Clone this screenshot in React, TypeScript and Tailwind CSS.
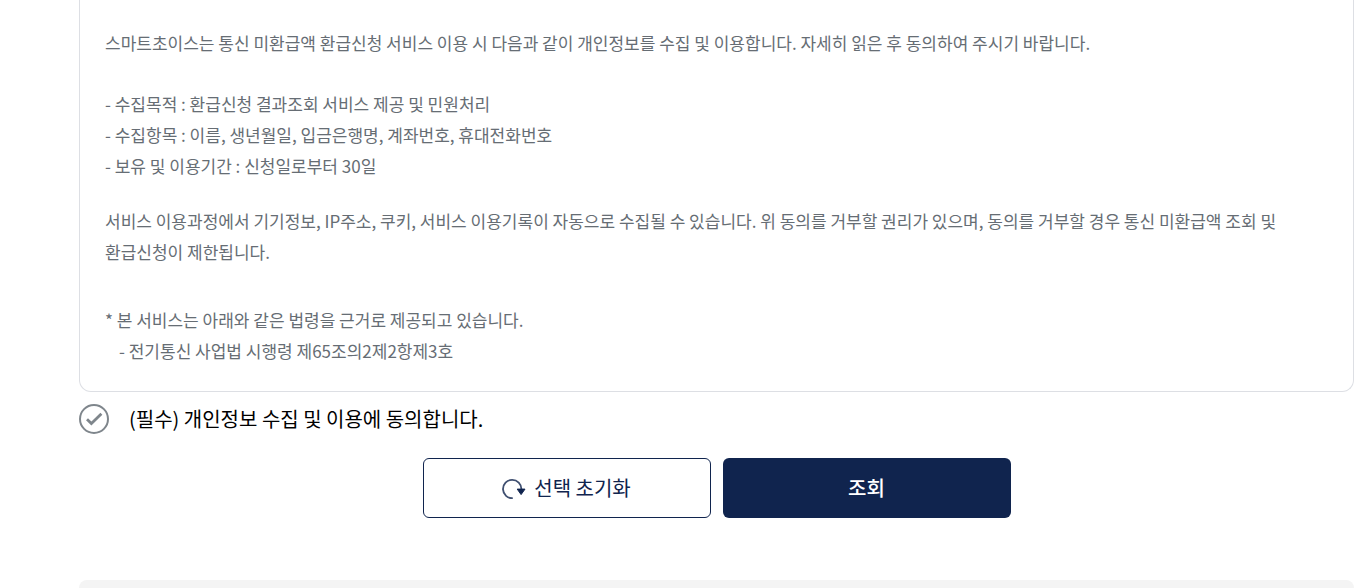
import { useState, type FC } from 'react';

const COLLECT_ITEMS = [
  '- 수집목적 : 환급신청 결과조회 서비스 제공 및 민원처리',
  '- 수집항목 : 이름, 생년월일, 입금은행명, 계좌번호, 휴대전화번호',
  '- 보유 및 이용기간 : 신청일로부터 30일',
];

const ResetIcon: FC = () => (
  <svg width="24" height="22" viewBox="0 0 24 22" fill="none" aria-hidden="true">
    <path d="M10.8 21.2A9.2 9.2 0 1 1 19.4 12.2" stroke="#3f4f70" strokeWidth="1.8" />
    <path d="M15.2 12.1h7.8l-3.9 5.5z" fill="#10244e" stroke="#10244e" strokeLinejoin="round" />
  </svg>
);

const App: FC = () => {
  const [agreed, setAgreed] = useState(false);

  return (
    <main className="h-screen overflow-hidden bg-white pr-[17px] pl-[79px] font-['Noto_Sans_CJK_KR',sans-serif] break-keep">
      <section className="rounded-b-xl border border-t-0 border-[#dddfe4] px-[25px] pt-[27px] pb-[25px] text-[17px] leading-[31px] text-[#666d74]">
        <p>
          스마트초이스는 통신 미환급액 환급신청 서비스 이용 시 다음과 같이 개인정보를 수집 및 이용합니다. 자세히 읽은 후 동의하여 주시기 바랍니다.
        </p>
        <ul className="mt-[30px]">
          {COLLECT_ITEMS.map((item) => (
            <li key={item}>{item}</li>
          ))}
        </ul>
        <p className="mt-6">
          서비스 이용과정에서 기기정보, IP주소, 쿠키, 서비스 이용기록이 자동으로 수집될 수 있습니다. 위 동의를 거부할 권리가 있으며, 동의를 거부할 경우 통신 미환급액 조회 및 환급신청이 제한됩니다.
        </p>
        <p className="mt-[37px]">* 본 서비스는 아래와 같은 법령을 근거로 제공되고 있습니다.</p>
        <p className="pl-[14px]">- 전기통신 사업법 시행령 제65조의2제2항제3호</p>
      </section>

      <div className="mt-3 flex items-center gap-5">
        <span className="grid size-[30px] shrink-0">
          <input
            id="agree"
            type="checkbox"
            checked={agreed}
            onChange={(e) => setAgreed(e.target.checked)}
            className="peer col-start-1 row-start-1 size-[30px] cursor-pointer appearance-none rounded-full border-2 border-[#7f868c] bg-white checked:border-[#10244e] checked:bg-[#10244e]"
          />
          <svg
            viewBox="0 0 30 30"
            fill="none"
            stroke="currentColor"
            strokeWidth="2.8"
            aria-hidden="true"
            className="pointer-events-none col-start-1 row-start-1 size-[30px] text-[#7f868c] peer-checked:text-white"
          >
            <path d="M8 15.2l4.4 4.4L22.4 9.8" />
          </svg>
        </span>
        <label htmlFor="agree" className="cursor-pointer text-xl leading-[30px] text-black">
          (필수) 개인정보 수집 및 이용에 동의합니다.
        </label>
      </div>

      <div className="mt-6 flex justify-center gap-3">
        <button
          type="button"
          onClick={() => setAgreed(false)}
          className="flex h-[60px] w-72 items-center justify-center gap-2 rounded-md border border-[#10244e] bg-white text-xl text-[#10244e]"
        >
          <ResetIcon />
          선택 초기화
        </button>
        <button
          type="button"
          className="h-[60px] w-72 rounded-md bg-[#10244e] text-xl font-medium text-white"
        >
          조회
        </button>
      </div>

      <div className="mt-[62px] h-20 rounded-lg bg-[#f4f4f4]" />
    </main>
  );
};

export default App;
